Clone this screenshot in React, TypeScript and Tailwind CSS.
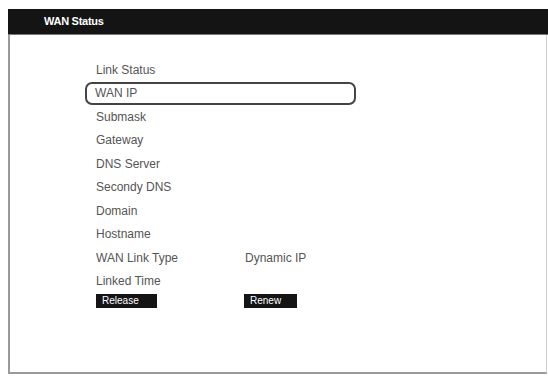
const rows: { label: string; value?: string; boxed?: boolean }[] = [
  { label: "Link Status" },
  { label: "WAN IP", boxed: true },
  { label: "Submask" },
  { label: "Gateway" },
  { label: "DNS Server" },
  { label: "Secondy DNS" },
  { label: "Domain" },
  { label: "Hostname" },
  { label: "WAN Link Type", value: "Dynamic IP" },
  { label: "Linked Time" },
];

export default function App() {
  return (
    <div
      className="w-[548px] h-[376px] bg-white pt-[9px] pl-[8px] overflow-hidden"
      style={{ fontFamily: '"Liberation Sans", Arial, sans-serif' }}
    >
      {/* title bar */}
      <div className="h-[26px] bg-[#141414] flex items-center pl-[36px] border-b border-[#777]">
        <span className="text-white text-[11px] font-bold tracking-tight">WAN Status</span>
      </div>

      {/* panel */}
      <div className="h-[339px] mr-[1px] border-l-2 border-b-2 border-r border-[#9a9a9a] border-r-[#cfcfcf]">
        <div className="pt-[23px] pl-[76px] flex flex-col">
          {rows.map((r) => (
            <div
              key={r.label}
              className={`h-[23.5px] flex items-center text-[12px] text-[#555] ${
                r.boxed
                  ? "w-[271px] border-2 border-[#444] rounded-[7px] pl-[8px] -ml-[1px]"
                  : "pl-[10px]"
              }`}
            >
              <span className="w-[149px]">{r.label}</span>
              {r.value && <span>{r.value}</span>}
            </div>
          ))}
          <div className="flex items-start pl-[10px] mt-[1px]">
            <div className="w-[148px] flex">
              <span className="block bg-[#141414] text-white text-[10px] px-[6px] h-[14px] leading-[14px] w-[61px]">
                Release
              </span>
            </div>
            <span className="block bg-[#141414] text-white text-[10px] px-[6px] h-[14px] leading-[14px] w-[53px]">
              Renew
            </span>
          </div>
        </div>
      </div>
    </div>
  );
}
